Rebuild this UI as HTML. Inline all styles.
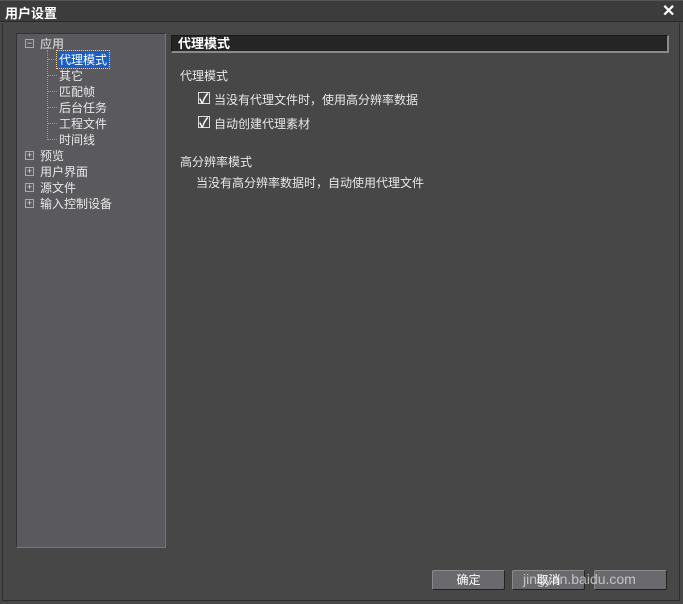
<!DOCTYPE html>
<html><head><meta charset="utf-8"><style>
*{margin:0;padding:0;box-sizing:border-box}
body{width:683px;height:604px;background:#474747;font-family:"Liberation Sans","Noto Sans CJK SC",sans-serif;font-size:12px;color:#e8e8e8;position:relative;overflow:hidden}
.a{position:absolute;white-space:nowrap}
#title{left:0;top:0;width:683px;height:22px;background:#3c3c3c;border-bottom:1px solid #2a2a2a;border-top:1px solid #555}
#frame{left:2px;top:23px;width:678px;height:578px;border:1px solid #2c2c2c;border-top:none}
#left{left:16px;top:33px;width:150px;height:515px;background:#5a5a5e;border:1px solid #333;border-right-color:#777;border-bottom-color:#777}
#hdr{left:171px;top:35px;width:498px;height:18px;background:#252525;border:1px solid #1a1a1a;border-right:2px solid #8a8a8a;border-bottom:2px solid #8a8a8a;font-weight:bold;color:#fff;padding-left:6px;line-height:15px;font-size:13px}
.pm{width:9px;height:9px;border:1px solid #aaa;font-size:9px;line-height:7px;text-align:center;color:#ddd}
.cb{width:12px;height:12px;border:1px solid #ddd;}
.ck{font-size:13px;font-weight:bold;color:#fff}
.btn{top:570px;width:73px;height:20px;background:#6a6a6e;border:1px solid #8a8a8a;border-bottom-color:#222;border-right-color:#222;text-align:center;line-height:18px;color:#fff;border-radius:2px}
.dl{border-left:1px dotted #999}
.h{width:22px;border-top:1px dotted #999}
</style></head><body>
<div class="a" id="title"></div>
<div class="a" style="left:5px;top:3px;font-weight:bold;color:#fff;font-size:13px">用户设置</div>
<div class="a" style="left:662px;top:1px;font-weight:bold;color:#fff;font-size:16px">✕</div>
<div class="a" id="frame"></div>
<div class="a" id="left"></div>
<div class="a dl" style="left:47px;top:50px;height:90px;width:1px"></div>
<div class="a h" style="left:48px;top:59px;width:8px"></div>
<div class="a h" style="left:48px;top:75px;width:9px"></div>
<div class="a h" style="left:48px;top:91px;width:9px"></div>
<div class="a h" style="left:48px;top:107px;width:9px"></div>
<div class="a h" style="left:48px;top:123px;width:9px"></div>
<div class="a h" style="left:48px;top:139px;width:9px"></div>
<div class="a pm" style="left:25px;top:39px">−</div>
<div class="a" style="left:40px;top:35px">应用</div>
<div class="a" style="left:57px;top:51px;background:#1c5fc4;color:#fff;padding:0 2px;outline:1px dotted #fc8">代理模式</div>
<div class="a" style="left:59px;top:67px">其它</div>
<div class="a" style="left:59px;top:83px">匹配帧</div>
<div class="a" style="left:59px;top:99px">后台任务</div>
<div class="a" style="left:59px;top:115px">工程文件</div>
<div class="a" style="left:59px;top:131px">时间线</div>
<div class="a pm" style="left:25px;top:151px">+</div><div class="a" style="left:40px;top:147px">预览</div>
<div class="a pm" style="left:25px;top:167px">+</div><div class="a" style="left:40px;top:163px">用户界面</div>
<div class="a pm" style="left:25px;top:183px">+</div><div class="a" style="left:40px;top:179px">源文件</div>
<div class="a pm" style="left:25px;top:199px">+</div><div class="a" style="left:40px;top:195px">输入控制设备</div>
<div class="a" id="hdr">代理模式</div>
<div class="a" style="left:180px;top:67px">代理模式</div>
<div class="a cb" style="left:198px;top:92px"></div><div class="a ck" style="left:199px;top:88px">✓</div>
<div class="a" style="left:214px;top:91px">当没有代理文件时，使用高分辨率数据</div>
<div class="a cb" style="left:198px;top:116px"></div><div class="a ck" style="left:199px;top:112px">✓</div>
<div class="a" style="left:214px;top:115px">自动创建代理素材</div>
<div class="a" style="left:180px;top:153px">高分辨率模式</div>
<div class="a" style="left:196px;top:174px">当没有高分辨率数据时，自动使用代理文件</div>
<div class="a btn" style="left:432px">确定</div>
<div class="a btn" style="left:512px">取消</div>
<div class="a btn" style="left:594px"></div>
<div class="a" style="left:523px;top:571px;color:rgba(255,255,255,0.6);font-size:14px">jingyan.baidu.com</div>
</body></html>
